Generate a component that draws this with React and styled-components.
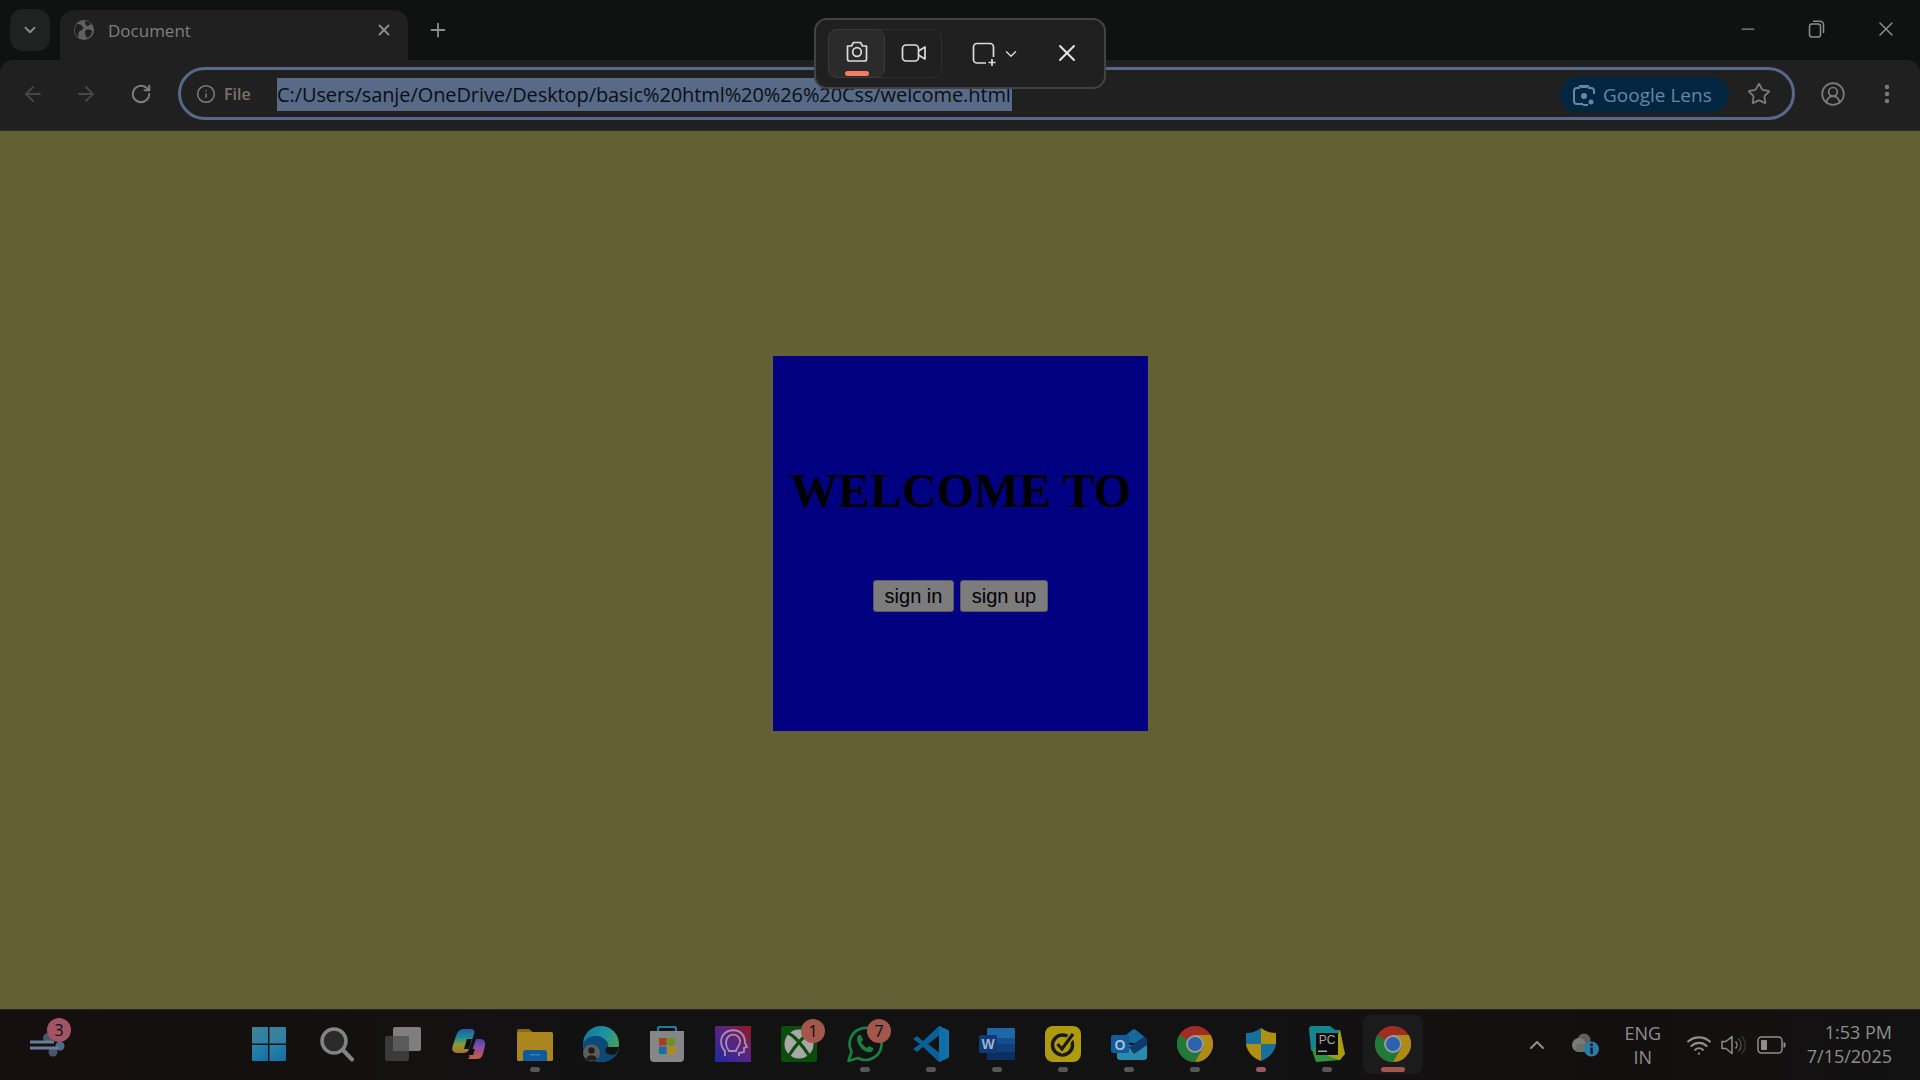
import styled, { createGlobalStyle } from "styled-components";
import {
  ArrowLeft,
  ArrowRight,
  RotateCw,
  Info,
  Star,
  CircleUserRound,
  EllipsisVertical,
  X,
  Plus,
  Minus,
  ChevronDown,
  ChevronUp,
  Wifi,
} from "lucide-react";

const GlobalStyle = createGlobalStyle`
  html, body {
    margin: 0;
    padding: 0;
    background: #121212;
  }
  * {
    box-sizing: border-box;
  }
`;

const uiFont = `"Open Sans", "Noto Sans", "Liberation Sans", sans-serif`;

const Screen = styled.div`
  width: 1920px;
  height: 1080px;
  display: flex;
  flex-direction: column;
  position: relative;
  overflow: hidden;
  font-family: ${uiFont};
`;

/* tab strip */
const TabStrip = styled.div`
  height: 60px;
  flex: none;
  display: flex;
  background: #101212;
  padding-left: 10px;
`;

const TabSearch = styled.div`
  width: 40px;
  height: 42px;
  margin-top: 9px;
  border-radius: 13px;
  background: #202121;
  color: #8a8a8a;
  display: flex;
  align-items: center;
  justify-content: center;
`;

const Tab = styled.div`
  width: 348px;
  height: 50px;
  margin: 10px 0 0 10px;
  padding: 0 15px 10px 13px;
  border-radius: 14px 14px 0 0;
  background: #202020;
  display: flex;
  align-items: center;
`;

const TabTitle = styled.span`
  margin-left: 13px;
  flex: 1;
  font-size: 17px;
  color: #7f7f7f;
`;

const NewTab = styled.div`
  width: 60px;
  color: #8c8c8c;
  display: flex;
  align-items: center;
  justify-content: center;
`;

const WindowControls = styled.div`
  margin-left: auto;
  display: flex;
`;

const WindowButton = styled.div`
  width: 69px;
  height: 58px;
  color: #8c8c8c;
  display: flex;
  align-items: center;
  justify-content: center;
`;

/* address row */
const Toolbar = styled.div`
  height: 71px;
  flex: none;
  background: #202020;
  border-radius: 14px 14px 0 0;
  border-bottom: 1px solid #2a2a2a;
  display: flex;
  align-items: center;
  padding: 0 0 4px 7px;
`;

const NavButton = styled.div`
  width: ${(p) => p.$w}px;
  margin-top: 2px;
  display: flex;
  justify-content: center;
  color: ${(p) => p.$color || "#474747"};
`;

const Omnibox = styled.div`
  width: 1617px;
  height: 53px;
  margin-left: 9px;
  border: 3px solid #56698a;
  border-radius: 27px;
  display: flex;
  align-items: center;
  padding: 2px 21px 0 15px;
`;

const FileChip = styled.span`
  display: flex;
  align-items: center;
  gap: 8px;
  width: 81px;
  flex: none;
  font-size: 16px;
  font-weight: 600;
  color: #7a7269;
`;

const InfoMark = styled.span`
  color: #7d7d7d;
  display: flex;
`;

const UrlText = styled.span`
  height: 33px;
  line-height: 33px;
  padding-right: 1px;
  background: #586a88;
  color: #0b0e13;
  font-size: 20px;
  letter-spacing: -0.095px;
  white-space: nowrap;
`;

const LensPill = styled.div`
  margin: 1px 0 0 auto;
  width: 169px;
  height: 36px;
  border-radius: 18px;
  background: #02263f;
  color: #5f8aa8;
  font-size: 19px;
  font-weight: 500;
  white-space: nowrap;
  display: flex;
  align-items: center;
  gap: 8px;
  padding-left: 13px;
`;

const StarButton = styled.div`
  margin-left: 18px;
  color: #7c7c7c;
  display: flex;
`;

/* page */
const Page = styled.main`
  flex: 1;
  background: #646035;
  display: flex;
  justify-content: center;
  padding: 225px 0 0 1px;
`;

const WelcomeCard = styled.section`
  width: 375px;
  height: 375px;
  background: #000080;
  display: flex;
  flex-direction: column;
  align-items: center;
  padding-top: 107px;
`;

const Heading = styled.h1`
  margin: 0;
  font-family: "Liberation Serif", "Times New Roman", serif;
  font-size: 48px;
  line-height: 56px;
  font-weight: 700;
  color: #000;
  white-space: nowrap;
`;

const ButtonRow = styled.div`
  margin-top: 61px;
  display: flex;
  gap: 6px;
`;

const PageButton = styled.button`
  width: ${(p) => p.$w}px;
  height: 32px;
  padding: 0;
  border: 1px solid #5a5a5a;
  border-radius: 3px;
  background: #7c7c7c;
  color: #000;
  font-family: "Liberation Sans", Arial, sans-serif;
  font-size: 20px;
`;

/* taskbar */
const Taskbar = styled.footer`
  height: 71px;
  flex: none;
  background: linear-gradient(90deg, #160f0f 0%, #121212 35%, #121212 65%, #140f0f 85%, #121212 100%);
  border-top: 1px solid #242424;
  display: flex;
  align-items: center;
  padding-left: 30px;
`;

const Widget = styled.div`
  width: 40px;
  position: relative;
  display: flex;
`;

const TaskApps = styled.div`
  margin-left: 168px;
  display: flex;
`;

const TaskItem = styled.div`
  width: 66px;
  height: 70px;
  position: relative;
  display: flex;
  align-items: center;
  justify-content: center;
  padding-bottom: 2px;
  padding-right: ${(p) => p.$nudge || 0}px;
`;

const ActiveGlow = styled.div`
  position: absolute;
  left: 3px;
  right: 3px;
  top: 5px;
  bottom: 6px;
  border-radius: 8px;
  background: #1b1b1b;
`;

const IconWrap = styled.div`
  position: relative;
  display: flex;
`;

const RunDot = styled.span`
  position: absolute;
  left: 50%;
  bottom: 8px;
  transform: translateX(-50%);
  width: ${(p) => (p.$active ? 24 : 10)}px;
  height: 5px;
  border-radius: 3px;
  background: ${(p) => p.$color || "#575757"};
`;

const Badge = styled.span`
  position: absolute;
  top: ${(p) => p.$top ?? 9}px;
  left: ${(p) => p.$left ?? 35}px;
  width: 24px;
  height: 24px;
  border-radius: 50%;
  background: ${(p) => p.$bg || "#a3574c"};
  color: #0c0c0c;
  font-size: 16px;
  display: flex;
  align-items: center;
  justify-content: center;
`;

const Tray = styled.div`
  margin-left: auto;
  padding-right: 28px;
  display: flex;
  align-items: center;
  color: #8e8e8e;
`;

const TrayIcon = styled.div`
  margin-left: ${(p) => p.$ml || 0}px;
  display: flex;
  align-items: center;
`;

const TrayLang = styled.div`
  margin-left: 19px;
  width: 44px;
  text-align: center;
  font-size: 18px;
  line-height: 24px;
`;

const Clock = styled.div`
  margin: -2px 0 0 20px;
  text-align: right;
  font-size: 18px;
  line-height: 24px;
`;

/* snipping bar sits over the browser chrome */
const SnipBar = styled.div`
  position: absolute;
  left: 814px;
  top: 18px;
  width: 292px;
  height: 71px;
  border-radius: 13px;
  border: 2px solid #434343;
  background: #202020;
  display: flex;
  align-items: center;
  padding-left: 12px;
`;

const ModeGroup = styled.div`
  display: flex;
  border: 1px solid #2d2d2d;
  border-radius: 9px;
  height: 49px;
  width: 114px;
`;

const ModeButton = styled.div`
  width: ${(p) => (p.$on ? 58 : 56)}px;
  height: 49px;
  margin: -1px 0 0 ${(p) => (p.$on ? -1 : 0)}px;
  padding: ${(p) => (p.$on ? "0 0 3px 0" : "0 0 2px 2px")};
  position: relative;
  display: flex;
  align-items: center;
  justify-content: center;
  border-radius: 9px;
  color: #dcdcdc;
  background: ${(p) => (p.$on ? "#2b2b2b" : "transparent")};
  border: ${(p) => (p.$on ? "1px solid #3a3a3a" : "none")};
`;

const ModeMark = styled.span`
  position: absolute;
  left: 16px;
  bottom: 1px;
  width: 24px;
  height: 5px;
  border-radius: 3px;
  background: #f47c66;
`;

const ShapePick = styled.div`
  margin-left: 29px;
  display: flex;
  align-items: center;
  gap: 3px;
  color: #dcdcdc;
`;

const SnipClose = styled.div`
  margin: 0 0 2px 33px;
  color: #e4e4e4;
  display: flex;
`;

/* drawn icons */
const Favicon = () => (
  <svg width="22" height="22" viewBox="0 0 22 22">
    <circle cx="11" cy="11" r="10" fill="#616161" />
    <path d="M4 5c3 0 5 1 6 3s-1 3-3 4-2 3-1 6l-2-1c-3-3-3-8 0-12zM13 11c3-1 5 0 6 1 0 3-2 6-5 7-1-2-2-3-2-5s0-3 1-3zM12 2c3 0 5 1 6 3l-3 2c-2 0-3-1-3-5z" fill="#202020" />
  </svg>
);

const RestoreIcon = () => (
  <svg width="18" height="20" viewBox="0 0 18 20" fill="none" stroke="currentColor" strokeWidth="1.5">
    <rect x="1.5" y="5" width="11" height="13" rx="2.5" />
    <path d="M5 2.2h6.5A3.5 3.5 0 0 1 15.5 5.7V14" />
  </svg>
);

const LensIcon = () => (
  <svg width="22" height="24" viewBox="0 0 22 24" fill="none" stroke="currentColor" strokeWidth="2">
    <path d="M8 4h6M4 21a3 3 0 0 1-3-3V8a3 3 0 0 1 3-3h2l1-2h8l1 2h2a3 3 0 0 1 3 3v3M10 21H4" />
    <circle cx="11" cy="13" r="3" fill="currentColor" stroke="none" />
    <circle cx="18" cy="19" r="2.5" fill="currentColor" stroke="none" />
    <path d="M10 22h5" />
  </svg>
);

const CameraIcon = () => (
  <svg width="26" height="26" viewBox="0 1.5 26 26" fill="none" stroke="currentColor" strokeWidth="1.7">
    <path d="M3.500 8.500h4l2-3.500h7l2 3.500h4v13a2 2 0 0 1-2 2H5.500a2 2 0 0 1-2-2z" strokeLinejoin="round" />
    <circle cx="13" cy="14.500" r="4.300" />
  </svg>
);

const VideoIcon = () => (
  <svg width="26" height="26" viewBox="0 0 26 26" fill="none" stroke="currentColor" strokeWidth="1.7">
    <rect x="1.500" y="5" width="16" height="16" rx="3.500" />
    <path d="M17.500 11l6.500-4v12l-6.500-4" strokeLinejoin="round" />
  </svg>
);

const SnipShapeIcon = () => (
  <svg width="28" height="28" viewBox="0 0 28 28" fill="none" stroke="currentColor" strokeWidth="1.7">
    <path d="M15 23H6a3.500 3.500 0 0 1-3.500-3.500V7A3.500 3.500 0 0 1 6 3.500h13A3.500 3.500 0 0 1 22.500 7v10" />
    <path d="M21 19v7M17.500 22.500h7" />
  </svg>
);

const SpeakerIcon = () => (
  <svg width="26" height="24" viewBox="0 0 26 24" fill="none" stroke="currentColor" strokeWidth="1.500">
    <path d="M2 8.500h4L12 3.500v17L6 15.500H2z" strokeLinejoin="round" />
    <path d="M15.500 8.500a5 5 0 0 1 0 7" />
    <path d="M18.500 5.500a9.500 9.500 0 0 1 0 13" stroke="#4a4a4a" />
    <path d="M21.500 3a13 13 0 0 1 0 18" stroke="#333" />
  </svg>
);

const BatteryIcon = () => (
  <svg width="30" height="20" viewBox="0 0 30 20" fill="none">
    <rect x="1" y="2" width="24" height="16" rx="3.500" stroke="currentColor" strokeWidth="1.500" />
    <rect x="4" y="5" width="6" height="10" rx="1" fill="currentColor" />
    <path d="M26.500 7.500h1a1 1 0 0 1 1 1v3a1 1 0 0 1-1 1h-1z" fill="currentColor" />
  </svg>
);

const CloudInfoIcon = () => (
  <svg width="32" height="30" viewBox="0 0 32 30">
    <circle cx="14" cy="10" r="6.500" fill="#5f5f5f" />
    <circle cx="9" cy="15" r="7" fill="#7a7a7a" />
    <rect x="6" y="14" width="16" height="8" rx="4" fill="#6c6c6c" />
    <circle cx="21.500" cy="19" r="7.500" fill="#2c7ba6" />
    <rect x="20.300" y="17.500" width="2.500" height="6.500" fill="#0f1c24" />
    <circle cx="21.500" cy="14.800" r="1.500" fill="#0f1c24" />
  </svg>
);

const WeatherIcon = () => (
  <svg width="36" height="24" viewBox="0 0 36 24">
    <circle cx="18" cy="5" r="5" fill="#45586b" />
    <circle cx="23" cy="19" r="4.500" fill="#45586b" />
    <circle cx="30" cy="13" r="4.500" fill="#4f6d89" />
    <path d="M0 9h24M0 15h28" stroke="#6a7f94" strokeWidth="3" />
  </svg>
);

const StartIcon = () => (
  <svg width="36" height="36" viewBox="0 0 36 36">
    <defs>
      <linearGradient id="startTop" x1="0" y1="0" x2="1" y2="1">
        <stop offset="0" stopColor="#3e8595" />
        <stop offset="1" stopColor="#2a7ea8" />
      </linearGradient>
      <linearGradient id="startLow" x1="0" y1="0" x2="1" y2="1">
        <stop offset="0" stopColor="#2b87ab" />
        <stop offset="1" stopColor="#0f6ea6" />
      </linearGradient>
    </defs>
    <path d="M1 2a1 1 0 0 1 1-1h15v16.500H1z" fill="url(#startTop)" />
    <path d="M18.500 1H34a1 1 0 0 1 1 1v15.500H18.500z" fill="url(#startTop)" />
    <path d="M1 19h16v16H2a1 1 0 0 1-1-1z" fill="url(#startLow)" />
    <path d="M18.500 19H35v15a1 1 0 0 1-1 1H18.500z" fill="url(#startLow)" />
  </svg>
);

const SearchIcon = () => (
  <svg width="36" height="36" viewBox="0 0 36 36">
    <circle cx="15" cy="15" r="12" fill="#2a2a2a" stroke="#848484" strokeWidth="3.500" />
    <path d="M24 24l9 9.500" stroke="#848484" strokeWidth="4" strokeLinecap="round" />
  </svg>
);

const TaskViewIcon = () => (
  <svg width="36" height="36" viewBox="0 0 36 36">
    <rect x="8" y="1" width="28" height="24" rx="2" fill="#7e7e7e" />
    <rect x="0" y="10" width="24" height="25" rx="2" fill="#3b3b3b" />
    <rect x="8" y="10" width="16" height="15" fill="#5a5a5a" />
  </svg>
);

const CopilotIcon = () => (
  <svg width="34" height="30" viewBox="0 0 34 30">
    <defs>
      <linearGradient id="copA" x1="0" y1="0" x2="0" y2="1">
        <stop offset="0" stopColor="#1b5fa6" />
        <stop offset="0.35" stopColor="#1f8a9a" />
        <stop offset="0.65" stopColor="#8a9a34" />
        <stop offset="1" stopColor="#b0732a" />
      </linearGradient>
      <linearGradient id="copB" x1="0" y1="0" x2="0" y2="1">
        <stop offset="0" stopColor="#3a4aa6" />
        <stop offset="0.4" stopColor="#8a4ea6" />
        <stop offset="0.75" stopColor="#b4506a" />
        <stop offset="1" stopColor="#b8683a" />
      </linearGradient>
    </defs>
    <path d="M11 0h8c3 0 4 2 3 5l-5 15c-1 3-3 4-6 4H6c-5 0-7-3-5-8l3-9c2-5 4-7 7-7z" fill="url(#copA)" />
    <path d="M15 30h10c3 0 5-2 6-5l2-8c1-4-1-7-5-7h-4l-3 9c-1 3-2 6-4 7 1 2 0 4-2 4z" fill="url(#copB)" />
    <path d="M12 24c3 0 5-1 6-4h5l-2 6h-7z" fill="#0e0e0e" />
    <path d="M20 10l-3 10h-5l3-10z" fill="#0e0e0e" />
  </svg>
);

const ExplorerIcon = () => (
  <svg width="36" height="33" viewBox="0 0 36 33">
    <path d="M0 3a2 2 0 0 1 2-2h10l5 4H0z" fill="#8a680f" />
    <rect x="0" y="4" width="36" height="29" rx="1.500" fill="#ab861f" />
    <path d="M6 33v-8a3 3 0 0 1 3-3h18a3 3 0 0 1 3 3v8z" fill="#0f5a9a" />
    <rect x="13" y="26" width="10" height="1.500" fill="#2a80c0" />
  </svg>
);

const EdgeIcon = () => (
  <svg width="36" height="36" viewBox="0 0 36 36">
    <defs>
      <linearGradient id="edgeG" x1="0" y1="0" x2="1" y2="0.6">
        <stop offset="0" stopColor="#14709c" />
        <stop offset="0.55" stopColor="#1e93a0" />
        <stop offset="1" stopColor="#4da050" />
      </linearGradient>
    </defs>
    <circle cx="18" cy="18" r="18" fill="url(#edgeG)" />
    <path d="M0 18C3 10 14 8 20 12c5 3 7 8 4 11h12c-2 8-9 13-18 13C8 36 0 28 0 18z" fill="#0b4a78" />
    <path d="M36 21H24c-4 4 0 8 5 8 4 0 6-4 7-8z" fill="#121212" />
    <circle cx="8.500" cy="27" r="8.500" fill="#5d5d5d" />
    <circle cx="8.500" cy="24.500" r="3.200" fill="#1e1e1e" />
    <path d="M3 33c1-5 10-5 11 0-3 2-8 2-11 0z" fill="#1e1e1e" />
  </svg>
);

const StoreIcon = () => (
  <svg width="36" height="36" viewBox="0 0 36 36">
    <path d="M9 6V2.500A1.500 1.500 0 0 1 10.500 1h15A1.500 1.500 0 0 1 27 2.500V6" fill="none" stroke="#1f7ea0" strokeWidth="2.200" />
    <path d="M1 5h34v27a4 4 0 0 1-4 4H5a4 4 0 0 1-4-4z" fill="#868686" />
    <rect x="10" y="12" width="7.500" height="7.500" fill="#a7401f" />
    <rect x="18.500" y="12" width="7.500" height="7.500" fill="#6f8f1f" />
    <rect x="10" y="20.500" width="7.500" height="7.500" fill="#1a6ea8" />
    <rect x="18.500" y="20.500" width="7.500" height="7.500" fill="#b38a12" />
  </svg>
);

const HeadIcon = () => (
  <svg width="36" height="36" viewBox="0 0 36 36">
    <defs>
      <linearGradient id="headBg" x1="0" y1="1" x2="1" y2="0">
        <stop offset="0" stopColor="#1b2ba0" />
        <stop offset="0.55" stopColor="#5a2480" />
        <stop offset="1" stopColor="#921a1a" />
      </linearGradient>
    </defs>
    <rect width="36" height="36" fill="url(#headBg)" />
    <path d="M10 30v-5C5 20 5 12 9 8c5-5 14-5 18 0 3 3 3 7 3 9l2 4-3 1v4l-5 1v3" fill="none" stroke="#a98fae" strokeWidth="1.800" />
    <path d="M14 25c-4-5-4-12 0-15 4-3 10-1 11 4 1 4-3 7-4 11z" fill="none" stroke="#a98fae" strokeWidth="1.800" />
  </svg>
);

const XboxIcon = () => (
  <svg width="36" height="36" viewBox="0 0 36 36">
    <rect width="36" height="36" rx="2" fill="#0b4d0b" />
    <circle cx="18" cy="18" r="14.500" fill="#a8a8a8" />
    <path d="M7 7c5 2 14 11 22 24M29 7C24 9 15 18 7 31" fill="none" stroke="#0b4d0b" strokeWidth="3.200" />
  </svg>
);

const WhatsAppIcon = () => (
  <svg width="36" height="36" viewBox="0 0 36 36">
    <path d="M1.500 35l3-9.500A16 16 0 1 1 11 32z" fill="#121212" stroke="#178240" strokeWidth="2.600" strokeLinejoin="round" />
    <path d="M12 9c-2 1-3 5 0 10 3 5 8 8 12 7 2-1 3-3 2-4l-4-2-2 2c-2-1-5-4-6-6l2-2-2-5z" fill="#178240" />
  </svg>
);

const VsCodeIcon = () => (
  <svg width="36" height="36" viewBox="0 0 36 36">
    <path d="M26 0l10 4.500v27L26 36 10 21l-6 5-4-3 7-5-7-5 4-3 6 5z" fill="#0b5f96" />
    <path d="M26 9.500L15 18l11 8.500z" fill="#121212" />
    <path d="M26 0l10 4.500v27L26 36z" fill="#0f70a8" />
  </svg>
);

const WordIcon = () => (
  <svg width="36" height="32" viewBox="0 0 36 32">
    <rect x="8" y="0" width="28" height="32" rx="2" fill="#14508f" />
    <path d="M10 0h24a2 2 0 0 1 2 2v8H8V2a2 2 0 0 1 2-2z" fill="#1f68a6" />
    <rect x="8" y="16" width="28" height="8" fill="#103f7c" />
    <path d="M8 24h28v6a2 2 0 0 1-2 2H10a2 2 0 0 1-2-2z" fill="#0b2f63" />
    <rect x="0" y="7" width="18" height="18" rx="2" fill="#0d3a78" />
    <text x="9" y="21" textAnchor="middle" fontFamily="Liberation Sans" fontSize="14" fontWeight="700" fill="#9fb2cc">W</text>
  </svg>
);

const NortonIcon = () => (
  <svg width="36" height="36" viewBox="0 0 36 36">
    <rect width="36" height="36" rx="8" fill="#ae9b10" />
    <circle cx="17.500" cy="19" r="10" fill="none" stroke="#1b1a10" strokeWidth="3.500" />
    <path d="M12.500 18l4.500 5L28 8" fill="none" stroke="#ae9b10" strokeWidth="6.500" />
    <path d="M12.500 18l4.500 5L28 8" fill="none" stroke="#1b1a10" strokeWidth="3.200" />
  </svg>
);

const OutlookIcon = () => (
  <svg width="36" height="31" viewBox="0 0 36 31">
    <path d="M8 12L21 1c2-1 3-1 4 0l11 9v6z" fill="#17699c" />
    <path d="M6 16h30v12a3 3 0 0 1-3 3H9a3 3 0 0 1-3-3z" fill="#2a8ba8" />
    <path d="M18 18L33 8l3 2v6L23 25z" fill="#0c3a6c" />
    <rect x="0" y="6" width="18" height="18" rx="2" fill="#125a9c" />
    <text x="9" y="20.500" textAnchor="middle" fontFamily="Liberation Sans" fontSize="14" fontWeight="700" fill="#a6bfd8">O</text>
  </svg>
);

const ChromeIcon = () => (
  <svg width="36" height="36" viewBox="0 0 36 36">
    <circle cx="18" cy="18" r="18" fill="#a02c22" />
    <path d="M18 18L2.400 9A18 18 0 0 0 18 36l9-15.600z" fill="#1f7a3a" />
    <path d="M18 9h15.600A18 18 0 0 1 18 36l9-15.600z" fill="#ae8a16" />
    <circle cx="18" cy="18" r="9" fill="#9a9a9a" />
    <circle cx="18" cy="18" r="7" fill="#2a62b0" />
  </svg>
);

const ShieldIcon = () => (
  <svg width="30" height="33" viewBox="0 0 30 33">
    <path d="M15 0C11 3 6 5 0 5v11h15z" fill="#17709c" />
    <path d="M15 0c4 3 9 5 15 5v11H15z" fill="#b0900f" />
    <path d="M0 16h15v17C7 30 1 24 0 16z" fill="#b0900f" />
    <path d="M30 16H15v17c8-3 14-9 15-17z" fill="#17709c" />
  </svg>
);

const PyCharmIcon = () => (
  <svg width="36" height="36" viewBox="0 0 36 36">
    <path d="M0 3a3 3 0 0 1 3-3h18l5 4h5l2 10-25 14-6-4z" fill="#12868f" />
    <path d="M3 24l6-4 23 6-1 8-24 2z" fill="#2f9440" />
    <path d="M31 4l5 24-5 6-12-4z" fill="#a89e10" />
    <rect x="7" y="7" width="22" height="22" fill="#0a0a0a" />
    <text x="18" y="18" textAnchor="middle" fontFamily="Liberation Sans" fontSize="12" fill="#a8a8a8">PC</text>
    <rect x="9" y="24.500" width="9" height="1.500" fill="#a8a8a8" />
  </svg>
);

const taskApps = [
  { key: "start", icon: <StartIcon />, nudge: 4 },
  { key: "search", icon: <SearchIcon /> },
  { key: "taskview", icon: <TaskViewIcon /> },
  { key: "copilot", icon: <CopilotIcon /> },
  { key: "explorer", icon: <ExplorerIcon />, dot: true },
  { key: "edge", icon: <EdgeIcon /> },
  { key: "store", icon: <StoreIcon /> },
  { key: "head", icon: <HeadIcon /> },
  { key: "xbox", icon: <XboxIcon />, badge: "1" },
  { key: "whatsapp", icon: <WhatsAppIcon />, badge: "7", dot: true },
  { key: "vscode", icon: <VsCodeIcon />, dot: true },
  { key: "word", icon: <WordIcon />, dot: true },
  { key: "norton", icon: <NortonIcon />, dot: true },
  { key: "outlook", icon: <OutlookIcon />, dot: true },
  { key: "chrome", icon: <ChromeIcon />, dot: true },
  { key: "shield", icon: <ShieldIcon />, dot: "#a0566a" },
  { key: "pycharm", icon: <PyCharmIcon />, dot: true },
  { key: "chrome2", icon: <ChromeIcon />, active: true },
];

const App = () => {
  return (
    <Screen>
      <GlobalStyle />
      <TabStrip>
        <TabSearch>
          <ChevronDown size={18} strokeWidth={2.5} />
        </TabSearch>
        <Tab>
          <Favicon />
          <TabTitle>Document</TabTitle>
          <X size={18} color="#8c8c8c" strokeWidth={2.5} />
        </Tab>
        <NewTab>
          <Plus size={22} strokeWidth={2} />
        </NewTab>
        <WindowControls>
          <WindowButton>
            <Minus size={20} strokeWidth={1.5} />
          </WindowButton>
          <WindowButton>
            <RestoreIcon />
          </WindowButton>
          <WindowButton>
            <X size={24} strokeWidth={1.5} />
          </WindowButton>
        </WindowControls>
      </TabStrip>

      <Toolbar>
        <NavButton $w={52}>
          <ArrowLeft size={24} strokeWidth={1.8} />
        </NavButton>
        <NavButton $w={54}>
          <ArrowRight size={24} strokeWidth={1.8} />
        </NavButton>
        <NavButton $w={56} $color="#7d7d7d">
          <RotateCw size={22} strokeWidth={2.2} />
        </NavButton>
        <Omnibox>
          <FileChip>
            <InfoMark>
              <Info size={20} strokeWidth={1.8} />
            </InfoMark>
            File
          </FileChip>
          <UrlText>C:/Users/sanje/OneDrive/Desktop/basic%20html%20%26%20Css/welcome.html</UrlText>
          <LensPill>
            <LensIcon />
            Google Lens
          </LensPill>
          <StarButton>
            <Star size={24} strokeWidth={1.8} />
          </StarButton>
        </Omnibox>
        <NavButton $w={76} $color="#7c7c7c">
          <CircleUserRound size={26} strokeWidth={1.6} />
        </NavButton>
        <NavButton $w={32} $color="#7c7c7c">
          <EllipsisVertical size={24} strokeWidth={2.4} />
        </NavButton>
      </Toolbar>

      <Page>
        <WelcomeCard>
          <Heading>WELCOME TO</Heading>
          <ButtonRow>
            <PageButton $w={81}>sign in</PageButton>
            <PageButton $w={88}>sign up</PageButton>
          </ButtonRow>
        </WelcomeCard>
      </Page>

      <Taskbar>
        <Widget>
          <WeatherIcon />
          <Badge $top={-15} $left={17} $bg="#a15465">3</Badge>
        </Widget>
        <TaskApps>
          {taskApps.map((app) => (
            <TaskItem key={app.key} $nudge={app.nudge}>
              {app.active && <ActiveGlow />}
              <IconWrap>{app.icon}</IconWrap>
              {app.badge && <Badge>{app.badge}</Badge>}
              {app.dot && <RunDot $color={app.dot === true ? undefined : app.dot} />}
              {app.active && <RunDot $active $color="#a3574c" />}
            </TaskItem>
          ))}
        </TaskApps>
        <Tray>
          <TrayIcon>
            <ChevronUp size={24} strokeWidth={2} />
          </TrayIcon>
          <TrayIcon $ml={21}>
            <CloudInfoIcon />
          </TrayIcon>
          <TrayLang>
            ENG
            <br />
            IN
          </TrayLang>
          <TrayIcon $ml={21}>
            <Wifi size={26} strokeWidth={2} />
          </TrayIcon>
          <TrayIcon $ml={8}>
            <SpeakerIcon />
          </TrayIcon>
          <TrayIcon $ml={11}>
            <BatteryIcon />
          </TrayIcon>
          <Clock>
            1:53 PM
            <br />
            7/15/2025
          </Clock>
        </Tray>
      </Taskbar>

      <SnipBar>
        <ModeGroup>
          <ModeButton $on>
            <CameraIcon />
            <ModeMark />
          </ModeButton>
          <ModeButton>
            <VideoIcon />
          </ModeButton>
        </ModeGroup>
        <ShapePick>
          <SnipShapeIcon />
          <ChevronDown size={18} strokeWidth={1.8} />
        </ShapePick>
        <SnipClose>
          <X size={28} strokeWidth={1.7} />
        </SnipClose>
      </SnipBar>
    </Screen>
  );
};

export default App;
